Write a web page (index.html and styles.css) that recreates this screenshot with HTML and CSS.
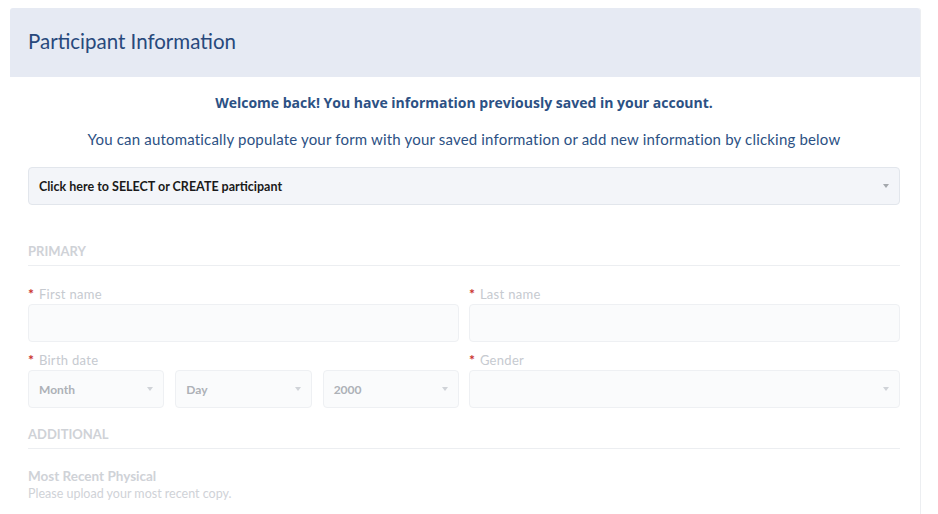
FILE: index.html
```html
<!DOCTYPE html>
<html lang="en">
<head>
    <meta charset="UTF-8" />
    <meta name="viewport" content="width=device-width, initial-scale=1.0" />
    <title>Participant Information</title>
    <link rel="stylesheet" href="styles.css">
</head>
<body>
    <div class="card">
        <div class="card-header">Participant Information</div>
        <div class="card-body">
            <p class="welcome">Welcome back! You have information previously saved in your account.</p>
            <p class="intro">You can automatically populate your form with your saved information or add new information by clicking below</p>

            <div class="select picker">
                <span>Click here to SELECT or CREATE participant</span>
                <span class="caret"></span>
            </div>

            <div class="section-title">Primary</div>

            <div class="row">
                <div class="field">
                    <label><span class="req">*</span> First name</label>
                    <div class="input"></div>
                </div>
                <div class="field">
                    <label><span class="req">*</span> Last name</label>
                    <div class="input"></div>
                </div>
            </div>

            <div class="row">
                <div class="field">
                    <label><span class="req">*</span> Birth date</label>
                    <div class="date-row">
                        <div class="select"><span>Month</span><span class="caret"></span></div>
                        <div class="select"><span>Day</span><span class="caret"></span></div>
                        <div class="select"><span>2000</span><span class="caret"></span></div>
                    </div>
                </div>
                <div class="field">
                    <label><span class="req">*</span> Gender</label>
                    <div class="select"><span></span><span class="caret"></span></div>
                </div>
            </div>

            <div class="section-title additional">Additional</div>

            <div class="upload">
                <div class="upload-title">Most Recent Physical</div>
                <div class="upload-help">Please upload your most recent copy.</div>
            </div>
        </div>
    </div>
</body>
</html>
```

FILE: styles.css
```css
body {
    font-family: 'Lato', 'Liberation Sans', sans-serif;
    margin: 0;
    padding: 8px 0 0 10px;
    background-color: #ffffff;
    overflow: hidden;
}
.card {
    width: 910px;
    min-height: calc(100vh - 8px);
    border-right: 1px solid #eceef1;
    border-radius: 3px 3px 0 0;
    background: #fff;
}
.card-header {
    background-color: #e6eaf3;
    height: 69px;
    box-sizing: border-box;
    padding: 0 18px 4px;
    display: flex;
    align-items: center;
    font-size: 20.5px;
    color: #28497c;
    border-radius: 3px 3px 0 0;
}
.card-body {
    padding: 17px 20px 0 18px;
}
.welcome {
    margin: 0;
    text-align: center;
    font-family: 'Open Sans', 'Lato', sans-serif;
    font-size: 14px;
    font-weight: bold;
    color: #2c5184;
    line-height: 18px;
}
.intro {
    margin: 17px 0 0;
    text-align: center;
    font-size: 15px;
    letter-spacing: 0.18px;
    color: #2c5184;
    line-height: 20px;
}
.select, .input {
    height: 38px;
    box-sizing: border-box;
    border: 1px solid #eef0f3;
    border-radius: 4px;
    background: #fafbfc;
}
.select {
    display: flex;
    align-items: center;
    justify-content: space-between;
    padding: 0 10px;
    font-size: 12px;
    font-weight: bold;
    color: #adb1b7;
}
.caret {
    width: 0;
    height: 0;
    border-left: 3px solid transparent;
    border-right: 3px solid transparent;
    border-top: 4px solid #d0d3d8;
}
.picker {
    margin-top: 18px;
    background: #f3f5f9;
    border-color: #e2e6ec;
    color: #1a1a1a;
    font-size: 12.5px;
}
.picker .caret {
    border-top-color: #a4a8ad;
}
.section-title {
    margin-top: 38px;
    padding-bottom: 6px;
    border-bottom: 1px solid #eceef1;
    font-size: 13px;
    font-weight: bold;
    text-transform: uppercase;
    color: #cfd2d7;
    line-height: 16px;
}
.section-title.additional {
    margin-top: 18px;
}
.row {
    display: grid;
    grid-template-columns: 1fr 1fr;
    gap: 10px;
    margin-top: 20px;
}
.row + .row {
    margin-top: 10px;
}
label {
    display: block;
    font-size: 13px;
    letter-spacing: 0.3px;
    color: #c6cad0;
    line-height: 16px;
    margin-bottom: 2px;
}
.req {
    color: #c9302c;
    font-weight: bold;
    font-size: 14px;
    margin-right: 1px;
}
.date-row {
    display: grid;
    grid-template-columns: 1fr 1fr 1fr;
    gap: 11px;
}
.upload {
    margin-top: 19px;
}
.upload-title {
    font-size: 13.5px;
    font-weight: bold;
    color: #cfd2d7;
    line-height: 16px;
}
.upload-help {
    font-size: 12.5px;
    color: #cfd2d7;
    line-height: 16px;
    margin-top: 2px;
}
```
